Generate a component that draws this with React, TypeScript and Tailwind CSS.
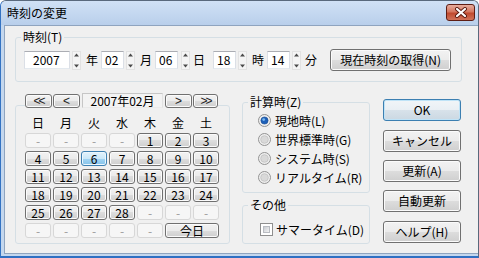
import type { ReactNode } from "react";

const btn =
  "border border-[#707070] rounded-[3px] bg-[linear-gradient(to_bottom,#f2f2f2_0%,#ebebeb_50%,#dddddd_50%,#cfcfcf_100%)] shadow-[inset_0_0_0_1px_#fbfbfb]";

const navBtn = `${btn} h-[14px] flex items-center justify-center font-['Liberation_Sans',sans-serif] text-[12px] leading-[12px] text-[#222]`;

const cells: (string | null)[] = [
  null, null, null, null, "1", "2", "3",
  "4", "5", "6", "7", "8", "9", "10",
  "11", "12", "13", "14", "15", "16", "17",
  "18", "19", "20", "21", "22", "23", "24",
  "25", "26", "27", "28", null, null, null,
  null, null, null, null, null,
];

function Spin() {
  return (
    <svg width="9" height="19" viewBox="0 0 9 19" className="shrink-0">
      <rect x="0.5" y="0.5" width="8" height="18" fill="#f4f4f4" stroke="#e2e2e2" />
      <path d="M2 5.5 L4.5 2.5 L7 5.5 Z" fill="#4a4a4a" />
      <path d="M2 13.5 L4.5 16.5 L7 13.5 Z" fill="#4a4a4a" />
    </svg>
  );
}

function Field({ value, w, pl = "pl-[3px]", cls }: { value: string; w: string; pl?: string; cls: string }) {
  return (
    <div
      className={`${w} ${pl} ${cls} h-[18px] shrink-0 bg-white border border-[#abadb3] border-x-[#dbdfe6] border-b-[#e3e9ef] leading-[16px]`}
    >
      {value}
    </div>
  );
}

function Radio({ checked, label }: { checked?: boolean; label: string }) {
  return (
    <div className="h-[19px] flex items-center">
      <svg width="13" height="13" viewBox="0 0 13 13" className="shrink-0">
        <circle cx="6.5" cy="6.5" r="6" fill="#eeeeee" stroke="#939393" />
        {checked ? (
          <>
            <circle cx="6.5" cy="6.5" r="3.6" fill="#1d5fb8" stroke="#174a8e" strokeWidth="0.6" />
            <circle cx="5.7" cy="5.6" r="1.4" fill="#79b8ef" />
          </>
        ) : (
          <circle cx="6.5" cy="6.5" r="3.8" fill="#d9d9d9" stroke="#c2c2c2" strokeWidth="0.8" />
        )}
      </svg>
      <span className="ml-[4px]">{label}</span>
    </div>
  );
}

function Group({ title, children, cls }: { title: ReactNode; children: ReactNode; cls: string }) {
  return (
    <fieldset className={`border border-[#d5dfe5] rounded-[3px] p-0 m-0 min-w-0 ${cls}`}>
      <legend className="ml-[5px] px-[2px] leading-[14px]">{title}</legend>
      {children}
    </fieldset>
  );
}

export default function App() {
  return (
    <div className="w-[479px] h-[258px] flex flex-col bg-[#c4d7ee] border border-[#59697c] border-l-[#3473c3] border-b-2 border-b-[#2f6fc2] rounded-t-[6px] overflow-hidden text-[12px] leading-[14px] text-black font-['Noto_Sans_CJK_JP','Noto_Sans',sans-serif]">
      {/* title bar */}
      <div className="h-[24px] shrink-0 flex items-start bg-[linear-gradient(to_bottom,#d0e1f5,#b9cfeb)]">
        <span className="ml-[6px] mt-[5px]">時刻の変更</span>
        <div className="ml-auto mt-[3px] mr-[3px] w-[29px] h-[17px] rounded-[3px] border border-[#5e1d14] bg-[linear-gradient(to_bottom,#e7ad9e_0%,#d47760_45%,#c04a2f_55%,#d0735a_100%)] flex items-center justify-center">
          <svg width="14" height="11" viewBox="0 0 14 11">
            <path d="M3 2 L11 9 M11 2 L3 9" stroke="#5a1a10" strokeWidth="4" strokeLinecap="round" />
            <path d="M3 2 L11 9 M11 2 L3 9" stroke="#ffffff" strokeWidth="2.2" strokeLinecap="round" />
          </svg>
        </div>
      </div>

      {/* client area */}
      <div className="flex-1 ml-[3px] mb-[2px] bg-[#f0f0f0] border border-[#8fa4bf] border-r-0 flex flex-col">
        <Group title="時刻(T)" cls="ml-[10px] mt-[4px] w-[447px]">
          <div className="flex items-center h-[22px] mt-[5px] pl-[8px] mb-[10px]">
            <Field value="2007" w="w-[46px]" pl="pl-[8px]" cls="" />
            <div className="ml-[2px]"><Spin /></div>
            <span className="ml-[5px]">年</span>
            <Field value="02" w="w-[23px]" cls="ml-[3px]" />
            <div className="ml-[2px]"><Spin /></div>
            <span className="ml-[5px]">月</span>
            <Field value="06" w="w-[23px]" cls="ml-[3px]" />
            <div className="ml-[3px]"><Spin /></div>
            <span className="ml-[3px]">日</span>
            <Field value="18" w="w-[23px]" cls="ml-[8px]" />
            <div className="ml-[2px]"><Spin /></div>
            <span className="ml-[5px]">時</span>
            <Field value="14" w="w-[23px]" cls="ml-[3px]" />
            <div className="ml-[2px]"><Spin /></div>
            <span className="ml-[4px]">分</span>
            <button className={`${btn} ml-[13px] w-[121px] h-[22px] leading-[14px]`}>現在時刻の取得(N)</button>
          </div>
        </Group>

        <div className="flex items-start">
          {/* calendar */}
          <fieldset className="border border-[#d5dfe5] rounded-[3px] p-0 m-0 min-w-0 ml-[10px] mt-[12px] w-[215px]">
            <legend className="ml-[9px] px-0 pb-[8px]">
              <div className="flex h-[14px]">
                <button className={`${navBtn} w-[27px] tracking-[-2px]`}>{"<<"}</button>
                <button className={`${navBtn} ml-[1px] w-[27px]`}>{"<"}</button>
                <div className="ml-[2px] w-[81px] h-[15px] -mt-[1px] border border-[#c6c6c6] border-b-[#eaeaea] border-r-[#e2e2e2] bg-[#f3f3f3] text-center leading-[13px]">
                  2007年02月
                </div>
                <button className={`${navBtn} ml-[2px] w-[27px]`}>{">"}</button>
                <button className={`${navBtn} ml-[1px] w-[25px] tracking-[-2px]`}>{">>"}</button>
              </div>
            </legend>
            <div className="pl-[9px] pb-[5px]">
              <div className="grid grid-cols-[repeat(7,26px)] gap-x-[2px] h-[14px] text-center leading-[14px]">
                {["日", "月", "火", "水", "木", "金", "土"].map((d) => (
                  <span key={d}>{d}</span>
                ))}
              </div>
              <div className="mt-[3px] grid grid-cols-[repeat(7,26px)] auto-rows-[15px] gap-x-[2px] gap-y-[3px] text-center leading-[13px]">
                {cells.map((c, i) =>
                  c === null ? (
                    <div key={i} className="border border-[#d7d7d7] rounded-[3px] bg-[#f6f6f6] text-[#9b9b9b]">
                      -
                    </div>
                  ) : c === "6" ? (
                    <div
                      key={i}
                      className="border border-[#3c7fb1] rounded-[3px] bg-[linear-gradient(to_bottom,#e3f3fc_0%,#cbe8f9_50%,#a4d5f3_50%,#85c3ea_100%)] shadow-[inset_0_0_0_1px_#ecf7fe]"
                    >
                      {c}
                    </div>
                  ) : (
                    <div key={i} className={btn}>
                      {c}
                    </div>
                  )
                )}
                <div className={`${btn} col-span-2`}>今日</div>
              </div>
            </div>
          </fieldset>

          {/* middle column */}
          <div className="ml-[12px] mt-[13px] w-[128px] flex flex-col">
            <Group title="計算時(Z)" cls="w-[128px]">
              <div className="pl-[15px] pt-[2px] pb-[5px]">
                <Radio checked label="現地時(L)" />
                <Radio label="世界標準時(G)" />
                <Radio label="システム時(S)" />
                <Radio label="リアルタイム(R)" />
              </div>
            </Group>
            <Group title="その他" cls="w-[128px] mt-[5px]">
              <div className="pl-[17px] pt-[9px] pb-[5px]">
                <div className="h-[17px] flex items-center">
                  <div className="w-[13px] h-[13px] border border-[#8f8f8f] bg-white p-[2px]">
                    <div className="w-full h-full bg-[linear-gradient(to_bottom_right,#c9ccd1,#f4f4f4)] border border-[#b9bcc2]" />
                  </div>
                  <span className="ml-[3px]">サマータイム(D)</span>
                </div>
              </div>
            </Group>
          </div>

          {/* buttons */}
          <div className="ml-[13px] mt-[17px] w-[78px] flex flex-col">
            <button className="h-[22px] rounded-[3px] border border-[#3c7fb1] bg-[linear-gradient(to_bottom,#f1f5f8_0%,#e9eff4_50%,#d8e2ea_50%,#cbd8e2_100%)] shadow-[inset_0_0_0_1px_#bfe3f7]">
              OK
            </button>
            <button className={`${btn} h-[22px] mt-[9px]`}>キャンセル</button>
            <button className={`${btn} h-[22px] mt-[8px]`}>更新(A)</button>
            <button className={`${btn} h-[22px] mt-[8px]`}>自動更新</button>
            <button className={`${btn} h-[22px] mt-[9px]`}>ヘルプ(H)</button>
          </div>
        </div>
      </div>
    </div>
  );
}
